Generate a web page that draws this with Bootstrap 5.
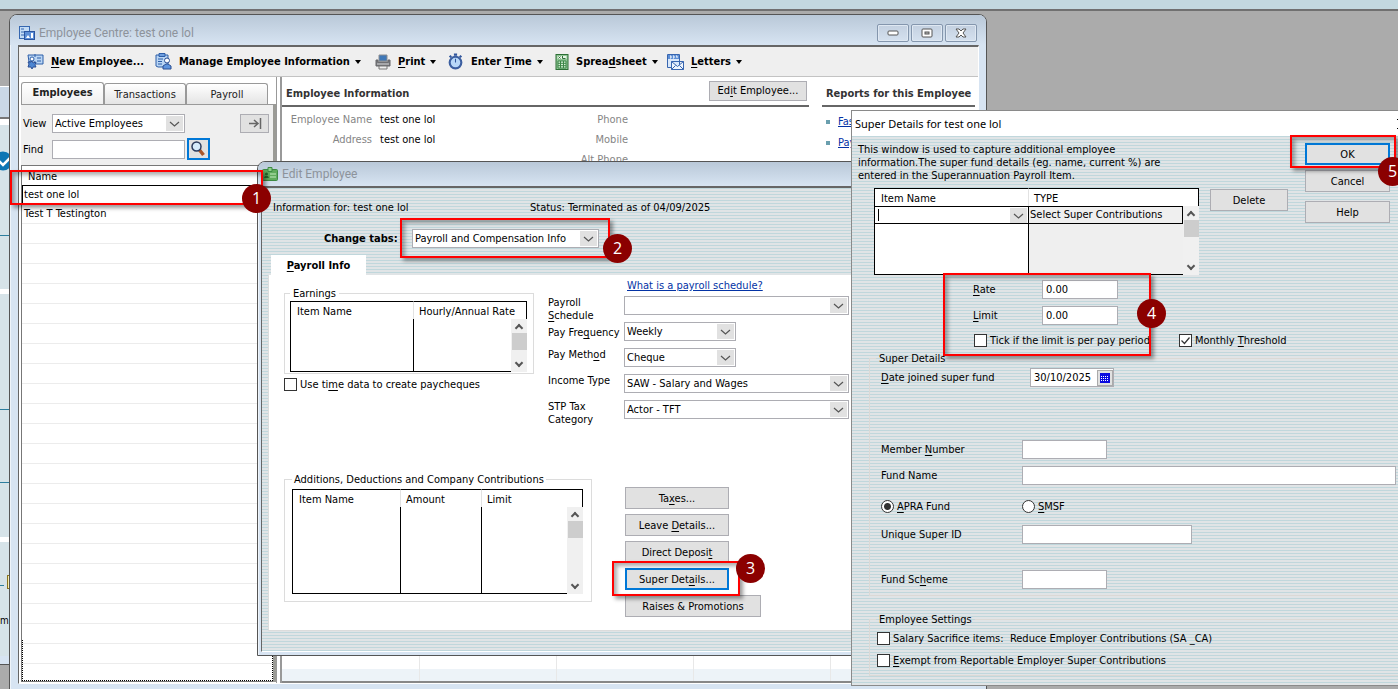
<!DOCTYPE html>
<html lang="en">
<head>
<meta charset="utf-8">
<meta name="viewport" content="width=device-width, initial-scale=1">
<title>Employee Centre</title>
<link rel="stylesheet" href="https://cdn.jsdelivr.net/npm/bootstrap@5.3.0/dist/css/bootstrap.min.css">
<style>
:root{--stripes:repeating-linear-gradient(#c0d7dc 0 1px,#e0e4e6 1px 3px);--frame:#d7e4f2;--line:#adadb3}
body{font:11px/13px "DejaVu Sans Condensed","Liberation Sans",sans-serif;color:#000;background:#ababab}
.desktop{overflow:hidden;background:#ababab}
.strip{height:11px;background:#c3d8df;border-bottom:2px solid #707070}
u{text-underline-offset:2px}
button,input,select{font:inherit;color:#000;border-radius:0}
label{white-space:nowrap}
a{color:#0433a5}

/* windows */
.win{position:absolute;background:var(--frame);border:1px solid #555;border-radius:8px 8px 0 0;overflow:hidden;box-shadow:inset 1px 1px #eef4fa}
.win-title{background:linear-gradient(#b9c8d8,#d7e4f2);color:#8d939b;font:12px/16px Roboto,"Liberation Sans",sans-serif}
.win-back{left:-30px;width:40px;top:86px;height:579px;border-radius:0;background:#d6e3e8}
.win-main{left:9px;right:411px;top:14px;bottom:-2px;padding:0 7px 6px 8px}
.win-edit{left:257px;width:612px;top:161px;padding:0 3px 3px}
.win-super{left:851px;right:-10px;top:110px;border-radius:0;border-color:#8a8a8a;background:#fff;box-shadow:none}
.win-main>.win-title{height:30px;margin:0 -7px 0 -8px;padding:9px 9px 3px 9px}
.win-edit>.win-title{height:24px;margin:0 -3px;padding:0 4px}
.win-super>.win-title{height:25px;background:#fff;color:#000;padding:0 0 0 3px;font:11px/16px "Noto Sans","Liberation Sans",sans-serif}
.client{border:1px solid #666;border-top-width:2px;border-right-color:#fff;border-bottom-color:#fff}
.capbtn{width:32px;height:18px;padding:0;border:1px solid #8496ad;border-radius:2px;background:linear-gradient(#c3d0e0,#d5e1ef);box-shadow:inset 0 0 0 1px #dfe8f2;display:flex;align-items:center;justify-content:center}
.capset{gap:2px}

/* toolbar */
.tools{display:grid;grid-template-columns:128px 220px 72px 108px 112px auto;height:30px;padding-left:8px;background:#efefef;border-bottom:1px solid #c3c3c3}
.tools button{display:flex;align-items:center;padding:0;border:0;background:none;font-weight:700;white-space:nowrap;text-align:left}
.tools svg{margin-right:7px;flex:none}
.tools button::after{content:"";border:3px solid transparent;border-top:4px solid #000;border-bottom:0;margin-left:5px}
.tools button:first-child::after{display:none}

/* side list */
.side{width:258px;padding:5px 0 1px 2px;border-right:1px solid #999}
.sidetab{height:21px;border:1px solid #999;border-bottom:0;border-radius:3px 3px 0 0;background:linear-gradient(#fff,#e4e4e4);width:82px;padding:0;color:#222}
.sidetab.active{background:linear-gradient(#fff,#efefef);font-weight:700;height:23px;margin-bottom:-1px;width:83px;padding-bottom:3px}
.sidebody{background:#efefef;border-top:1px solid #999;border-right:3px solid #9b9b96;padding-top:9px}
.siderow{padding-left:2px;margin-bottom:5px}
.siderow label{width:29px}
.siderow .fld{width:133px}
.fld{height:19px;border:1px solid var(--line);background:#fff;padding:0 3px;line-height:15px;min-width:0}
select.fld{appearance:none;padding-left:2px;padding-right:19px;background:#fff url("data:image/svg+xml,%3Csvg xmlns='http://www.w3.org/2000/svg' width='17' height='15'%3E%3Crect width='17' height='15' fill='%23e1e1e1'/%3E%3Cpath d='M4 6l4.500 4 4.500-4' fill='none' stroke='%23555' stroke-width='1.200'/%3E%3C/svg%3E") no-repeat right 1px center}
.push{border:1px solid var(--line);background:#e1e1e1;height:22px;padding:0;white-space:nowrap;font-weight:400}
.push.hot{border:2px solid #0078d7}
.list{border:1px solid #777;border-right:0;background:#fff}
.list .head{height:19px;padding:4px 6px 0}
.rowitem{height:20px;padding:3px 2px;border-bottom:1px solid #ececec}
.rowitem.sel{height:19px;border:1px solid #000;padding:2px 1px}
.blank{background:repeating-linear-gradient(#fff 0 19px,#ececec 19px 20px)}
.tail{height:41px;border:1px dotted #000;border-top:0}

/* employee panel */
.detail{margin-left:3px;border-left:2px solid #999;min-width:0}
.infocol{flex:0 0 527px}
.repcol{margin:0 3px 0 13px}
.rule{border-bottom:2px solid #666;height:30px;padding:4px 2px 0 4px;color:#333}
.rule h1{font-size:11px;line-height:13px;font-weight:700;margin:0;white-space:nowrap}
.rule .push{width:98px;height:20px;margin-bottom:5px}
.facts{display:grid;grid-template-columns:90px 154px 86px;column-gap:8px;grid-auto-rows:20px;align-items:center;padding-top:2px}
.facts dt{font-weight:400;color:#858585;text-align:right}
.facts dd{margin:0}
.bullet{width:4px;height:4px;background:#6a9fae}
.journal{border-bottom:2px solid #888}
.journal td{width:137px;height:13px;padding:0;border-right:1px solid #e8e8e8}
.journal tr+tr td{background:#edf3f8}

/* edit form */
.striped{background:var(--stripes)}
.editbody{padding-bottom:20px}
.pagetab{width:95px;height:20px;margin:5px 0 0 9px;background:#fff;border:0;font-weight:700}
.sheet{margin-left:6px;background:#fff;border:1px solid #dcdcdc;border-top:0;padding:0 0 13px 15px}
.inforow{height:38px;padding-left:11px}
.inforow span:first-child{width:257px}
.tabrow{height:24px;padding-left:62px}
.tabrow label{width:88px}
.tabrow .fld{width:187px}
fieldset{border:1px solid #dcdcdc;min-width:0}
legend{font-size:11px;line-height:13px;margin:0;padding:0 3px}
.earncol{padding-top:12px;margin-right:14px}
.earn{width:250px;padding:1px 5px}
.adds{width:308px;padding:3px 7px 7px}
.adds legend{padding:0 2px}
.lower{margin-top:47px}
.btncol{gap:5px;padding-top:14px;margin-left:33px}
.sheetgrid{border-collapse:separate;border-spacing:0;table-layout:fixed;background:#fff}
.sheetgrid th{height:18px;padding:1px 5px 0;font-weight:400;border-top:1px solid #000;border-left:1px solid #e2e2e2;white-space:nowrap}
.sheetgrid th:first-child{border-left-color:#000;padding-left:6px}
.sheetgrid th:last-child{border-right:1px solid #000}
.sheetgrid td{padding:0;border-left:1px solid #000;border-bottom:1px solid #000}
.sheetgrid td.sb{border:0;height:1px}
.sheetgrid .entryrow td:not(.sb){border-top:1px solid #000}
.sheetgrid .entryrow td:nth-child(2){border-right:1px solid #000}
.scroller{background:#f0f0f0;display:flex;flex-direction:column;align-items:center;height:100%}
.scroller::before,.scroller::after{content:"";width:6px;height:6px;border:solid #555;border-width:2px 0 0 2px;transform:rotate(45deg);margin:6px 0 2px}
.scroller::after{transform:rotate(225deg);margin:auto 0 6px}
.scroller i{width:15px;height:17px;background:#cdcdcd}
.c16{width:16px}.c81{width:81px}.c86{width:86px}.c98{width:98px}.c108{width:108px}.c123{width:123px}.c154{width:154px}.c155{width:155px}
.sheetgrid .h53{height:53px}.sheetgrid .h87{height:87px}.sheetgrid .h51{height:51px}
.payform{display:grid;grid-template-columns:76px 112px 113px;grid-auto-rows:26px;align-items:start}
.payform .wide{grid-column:2/4}
.paylink{margin-left:79px}
.tick{appearance:none;width:13px;height:13px;margin:0;border:1px solid #333;background:#fff;flex:none}
.tick[type=radio]{border-radius:50%}
.tick[type=radio]:checked{background:radial-gradient(#333 0 3px,#fff 4px)}
.tick[type=checkbox]:checked{background:#fff url("data:image/svg+xml,%3Csvg xmlns='http://www.w3.org/2000/svg' width='11' height='11'%3E%3Cpath d='M1.500 5.500l3 3 5-6' fill='none' stroke='%23333' stroke-width='1.200'/%3E%3C/svg%3E")}
.check{display:flex;align-items:center;gap:3px}
.wbtn{width:104px}.wbtn-l{width:136px}

/* super dialog */
.superbody{padding:0 0 9px 6px}
.topgrid{display:grid;grid-template-columns:352px 78px 102px}
.topgrid p{margin:0;padding-top:7px;height:52px}
.topgrid .sheetgrid{margin-left:16px}
.topgrid>.push{margin-top:53px}
.okcol{gap:5px;padding:7px 0 0 17px}
.limits{display:grid;grid-template-columns:69px 76px;row-gap:7px;margin:5px 0 0 115px;align-items:center}
.ticks{margin:9px 0 5px 116px}
.ticks .check:first-child{width:205px}
.faint{border-color:#dbd9d6;border-right:0;margin-left:11px;padding:0}
.faint legend{padding:0 3px;margin-left:6px}
.fund{display:grid;grid-template-columns:141px auto;align-items:center;margin-left:11px;height:19px}
.datebox{width:84px;padding:0;margin-left:8px}
.datebox input{width:66px;border:0;padding:0 0 0 3px;background:none}
.datebox button{width:17px;height:16px;border:1px solid #aaa;background:#e1e1e1;padding:0}
.w85{width:85px}.w170{width:170px}
.entry{background:#efefef;height:16px;padding:1px;white-space:nowrap}
.entry select{width:100%;height:16px;border:0;display:block}
.caret{position:absolute;left:3px;top:2px;width:1px;height:12px;background:#000}

/* numbered callouts */
.callout{position:absolute;border:2px solid #f00;box-shadow:3px 3px 4px #0006,inset 3px 3px 4px #0005;pointer-events:none}
.step{position:absolute;width:29px;height:29px;border-radius:50%;background:#8b0000;color:#fff;font:16px/29px "Open Sans","Noto Sans",sans-serif;text-align:center}
</style>
</head>
<body>
<main class="desktop position-relative vh-100">
<div class="strip"></div>

<!-- window at the back, mostly covered -->
<div class="win-back position-absolute overflow-hidden">
  <svg width="40" height="579" aria-hidden="true">
    <path d="M0 0h40v32H0z" fill="#cad8e7"/><path d="M0 0h40v1H0z" fill="#fff"/><path d="M0 31h40v2H0z" fill="#777"/><path d="M0 33h40v6H0zM0 203h40v5H0zM0 451h40v5H0z" fill="#fff"/>
    <path d="M0 149.500h40M0 323.500h40M0 396.500h40M0 499.500h34" stroke="#2c7e9e" fill="none"/>
    <circle cx="33" cy="75" r="9.500" fill="#0e76b4"/><path d="M28 74l5 5 7-7" fill="none" stroke="#fff" stroke-width="2.500"/>
    <rect x="37.500" y="489.500" width="8" height="13" fill="#f6eeb0" stroke="#8a7420"/>
    <path d="M0 570h40v9H0z" fill="#d7e4f2"/><path d="M0 578.500h40" stroke="#555"/>
    <text x="30" y="538" font-size="10">m</text>
  </svg>
</div>

<!-- Employee Centre -->
<section class="win win-main d-flex flex-column">
  <header class="win-title d-flex align-items-center">
    <svg class="me-1" width="16" height="15" viewBox="0 0 16 15"><rect x=".5" y=".5" width="10" height="12" fill="#c4dcf5" stroke="#3567b0"/><path d="M2 3h3M2 6h3M2 9h4" stroke="#3567b0"/><rect x="5.500" y="5.500" width="10" height="8" fill="#5d8fd6" stroke="#2b55a0"/><path d="M7 12l2-3 2 3zM12 12V7h2v5z" fill="#fff"/></svg>
    <span>Employee Centre: test one lol</span>
    <div class="capset d-flex ms-auto">
      <button class="capbtn" aria-label="Minimise"><svg width="12" height="6"><rect x="1" y="1" width="10" height="4" rx="1" fill="#fff" stroke="#555"/></svg></button>
      <button class="capbtn" aria-label="Maximise"><svg width="12" height="10"><rect x="1" y="1" width="10" height="8" rx="1" fill="#fff" stroke="#555"/><rect x="4" y="4" width="4" height="2" fill="#bbb" stroke="#555"/></svg></button>
      <button class="capbtn" aria-label="Close"><svg width="12" height="10"><path d="M1 1h3l2 2 2-2h3L8 5l3 4H8L6 7 4 9H1l3-4z" fill="#fff" stroke="#555"/></svg></button>
    </div>
  </header>
  <div class="client flex-grow-1 d-flex flex-column bg-white">
    <nav class="tools">
      <button><svg width="17" height="17" viewBox="0 0 17 17"><path d="M1 2h15v9H9l-3-4-4 2z" fill="#b9d5f4" stroke="#2d5ea8"/><path d="M8 1v3M10 5h4M10 8h4" stroke="#2d5ea8"/><circle cx="5" cy="6" r="2" fill="#fff" stroke="#2d5ea8"/><path d="M5 8l1 2 3-1-1 3 1 2-3 0-1 2-1-2H1l1-3-1-2 3 0z" fill="#4d86d2" stroke="#2b4f94"/></svg><span><u>N</u>ew Employee...</span></button>
      <button><svg width="17" height="17" viewBox="0 0 17 17"><path d="M1 2h12v12H3L1 13z" fill="#b9d5f4" stroke="#2d5ea8"/><path d="M4 .5h6v3H4z" fill="#6f9fdf" stroke="#2d5ea8"/><path d="M3 6h5M3 8.500h4M3 11h4" stroke="#2d5ea8"/><circle cx="12" cy="7.500" r="2.500" fill="#fff" stroke="#2b4f94"/><path d="M8 16v-3l3-2h2l3 2v3z" fill="#5f95de" stroke="#2b4f94"/></svg><span>Manage Employee Information</span></button>
      <button><svg width="16" height="16" viewBox="0 0 16 16"><path d="M4 1h8v6H4z" fill="#3f78b8" stroke="#8a8c90"/><path d="M1 6h2v2h10V6h2v6H1z" fill="#77787c" stroke="#66676b"/><path d="M2 9h12v2H2z" fill="#a7a8ab"/><path d="M4 12h8v3H4z" fill="#eee" stroke="#777"/></svg><span><u>P</u>rint</span></button>
      <button><svg width="17" height="17" viewBox="0 0 16 16"><path d="M6.500 1.500h3M2.500 4l1.500-1.500M13.500 4L12 2.500" stroke="#31569c" stroke-width="2"/><circle cx="8" cy="9" r="5.500" fill="#b9d8f8" stroke="#3c5fa0" stroke-width="2"/><path d="M8 5.500V9" fill="none" stroke="#31569c"/></svg><span>Enter <u>T</u>ime</span></button>
      <button><svg width="14" height="16" viewBox="0 0 13 16"><rect x=".5" y=".5" width="12" height="15" fill="#8cc493" stroke="#2c6e35"/><path d="M2 2h9v3H2z" fill="#e6f4e6"/><path d="M3 2.500l2 2M5 2.500l-2 2M7 2v2.500h3" stroke="#2c6e35" fill="none"/><path d="M2.500 7h8v7h-8zM2.500 9.300h8M2.500 11.700h8M5 7v7M8 7v7" fill="#d6efd6" stroke="#3b8646"/></svg><span>Sprea<u>d</u>sheet</span></button>
      <button><svg width="17" height="16" viewBox="0 0 17 16"><path d="M.5 .5h12v13H.5z" fill="#d9e8fa" stroke="#3765af"/><path d="M1 1h11v4H1z" fill="#5d8fd6"/><path d="M3 2h1v2H3M6 2h1v2H6M9 2h1v2" stroke="#fff" fill="none"/><path d="M4.500 7.500h12v8h-12zl6 5 6-5M4.500 15.500l4-4M16.500 15.500l-4-4" fill="#eef5fd" stroke="#3765af"/></svg><span><u>L</u>etters</span></button>
    </nav>
    <div class="d-flex flex-grow-1">
      <aside class="side d-flex flex-column">
        <div class="d-flex align-items-end" role="tablist">
          <button class="sidetab active" role="tab">Employees</button><button class="sidetab" role="tab">Transactions</button><button class="sidetab" role="tab">Payroll</button>
        </div>
        <div class="sidebody flex-grow-1 d-flex flex-column">
          <div class="siderow d-flex align-items-center">
            <label for="view">View</label>
            <select id="view" class="fld"><option>Active Employees</option></select>
            <button class="push ms-auto me-1 d-flex align-items-center justify-content-center" style="height:19px;width:29px" aria-label="Expand list"><svg width="14" height="11"><path d="M1 5.500h9M6 2l4 3.500L6 9M12.500 0v11" fill="none" stroke="#666" stroke-width="1.500"/></svg></button>
          </div>
          <div class="siderow d-flex align-items-center">
            <label for="find">Find</label>
            <input id="find" class="fld">
            <button class="push hot d-flex align-items-center justify-content-center" style="width:23px;margin-left:2px" aria-label="Search"><svg width="15" height="16" viewBox="0 0 15 16"><path d="M8.500 9l4 5" stroke="#a8562a" stroke-width="3.500"/><circle cx="5.500" cy="5.500" r="4.500" fill="#d6ebfb" stroke="#2a3a5c" stroke-width="1.500"/></svg></button>
          </div>
          <div class="list flex-grow-1 d-flex flex-column">
            <div class="head">Name</div>
            <div class="rowitem sel">test one lol</div>
            <div class="rowitem">Test T Testington</div>
            <div class="blank flex-grow-1 d-flex flex-column justify-content-end"><div class="tail"></div></div>
          </div>
        </div>
      </aside>
      <div class="detail flex-grow-1 d-flex flex-column">
        <div class="d-flex">
          <div class="infocol">
            <div class="rule d-flex align-items-center"><h1>Employee Information</h1><button class="push ms-auto">Ed<u>i</u>t Employee...</button></div>
            <dl class="facts m-0">
              <dt>Employee Name</dt><dd>test one lol</dd><dt>Phone</dt>
              <dt style="grid-column:1">Address</dt><dd>test one lol</dd><dt>Mobile</dt>
              <dt style="grid-column:3">Alt Phone</dt>
            </dl>
          </div>
          <div class="repcol flex-grow-1">
            <div class="rule d-flex align-items-center"><h1>Reports for this Employee</h1></div>
            <div class="d-flex align-items-center pt-2 ps-1"><span class="bullet me-2"></span><a href="#">Fas</a></div>
            <div class="d-flex align-items-center pt-2 ps-1"><span class="bullet me-2"></span><a href="#">Pay</a></div>
          </div>
        </div>
        <table class="journal mt-auto align-self-start"><tbody><tr><td></td><td></td><td></td><td></td><td></td></tr><tr><td></td><td></td><td></td><td></td><td></td></tr></tbody></table>
      </div>
    </div>
  </div>
</section>

<!-- Edit Employee -->
<section class="win win-edit">
  <header class="win-title d-flex align-items-center">
    <svg class="me-1" width="16" height="14" viewBox="0 0 16 14"><rect x=".5" y="2.500" width="15" height="11" rx="1" fill="#5fab5c" stroke="#3d8a43"/><path d="M6 .500h4v4H6z" fill="#8fd08a" stroke="#3d8a43"/><path d="M8 7h6M8 10h6" stroke="#c6ecc0"/><circle cx="4.500" cy="7" r="1.500" fill="#246b2c"/><path d="M2 11h5l-1-2H3z" fill="#246b2c"/></svg>
    <span>Edit Employee</span>
  </header>
  <div class="client striped editbody">
    <div class="inforow d-flex align-items-center"><span>Information for: test one lol</span><span>Status: Terminated as of 04/09/2025</span></div>
    <div class="tabrow d-flex align-items-center">
      <label class="fw-bold" for="tabs">Change tabs:</label>
      <select id="tabs" class="fld"><option>Payroll and Compensation Info</option></select>
    </div>
    <button class="pagetab d-block" role="tab"><u>P</u>ayroll Info</button>
    <form class="sheet">
      <div class="d-flex">
        <div class="earncol">
          <fieldset class="earn"><legend class="float-none w-auto">Earnings</legend>
            <table class="sheetgrid"><colgroup><col class="c123"><col class="c98"><col class="c16"></colgroup>
              <thead><tr><th>Item Name</th><th colspan="2">Hourly/Annual Rate</th></tr></thead>
              <tbody><tr><td class="h53"></td><td></td><td class="sb"><div class="scroller"><i></i></div></td></tr></tbody></table>
          </fieldset>
          <div class="check mt-1"><input class="tick" type="checkbox" id="time"><label for="time">Use ti<u>m</u>e data to create paycheques</label></div>
        </div>
        <div class="pt-1">
          <a class="paylink d-block mb-1" href="#">What is a payroll schedule?</a>
          <div class="payform">
            <label for="sch">Payroll<br><u>S</u>chedule</label><select id="sch" class="fld wide"><option></option></select>
            <label for="frq" class="pt-1">Pay Fre<u>q</u>uency</label><select id="frq" class="fld"><option>Weekly</option></select><span></span>
            <label for="met">Pay Meth<u>o</u>d</label><select id="met" class="fld"><option>Cheque</option></select><span></span>
            <label for="inc">Income Type</label><select id="inc" class="fld wide"><option>SAW - Salary and Wages</option></select>
            <label for="stp">STP Tax<br>Category</label><select id="stp" class="fld wide"><option>Actor - TFT</option></select>
          </div>
        </div>
      </div>
      <div class="lower d-flex">
        <fieldset class="adds align-self-start"><legend class="float-none w-auto">Additions, Deductions and Company Contributions</legend>
          <table class="sheetgrid"><colgroup><col class="c108"><col class="c81"><col class="c86"><col class="c16"></colgroup>
            <thead><tr><th>Item Name</th><th>Amount</th><th colspan="2">Limit</th></tr></thead>
            <tbody><tr><td class="h87"></td><td></td><td></td><td class="sb"><div class="scroller"><i></i></div></td></tr></tbody></table>
        </fieldset>
        <div class="btncol d-flex flex-column">
          <button type="button" class="push wbtn">Ta<u>x</u>es...</button>
          <button type="button" class="push wbtn">Leave <u>D</u>etails...</button>
          <button type="button" class="push wbtn">Direct Deposi<u>t</u></button>
          <button type="button" class="push hot wbtn">Super Det<u>a</u>ils...</button>
          <button type="button" class="push wbtn-l">Raises &amp; Promotions</button>
        </div>
      </div>
    </form>
  </div>
</section>

<!-- Super Details -->
<section class="win win-super">
  <header class="win-title d-flex align-items-center"><span>Super Details for test one lol</span><svg class="ms-auto" width="10" height="10" aria-hidden="true"><path d="M0 0l10 10M10 0L0 10" stroke="#000"/></svg></header>
  <form class="superbody striped">
    <div class="topgrid">
      <div>
        <p>This window is used to capture additional employee<br>information.The super fund details (eg. name, current %) are<br>entered in the Superannuation Payroll Item.</p>
        <table class="sheetgrid"><colgroup><col class="c154"><col class="c155"><col class="c16"></colgroup>
          <thead><tr><th>Item Name</th><th colspan="2">TYPE</th></tr></thead>
          <tbody>
            <tr class="entryrow"><td><div class="entry p-0 position-relative"><select class="fld" aria-label="Item Name"><option></option></select><span class="caret"></span></div></td><td><div class="entry">Select Super Contributions</div></td><td class="sb" rowspan="2"><div class="scroller"><i></i></div></td></tr>
            <tr><td class="h51"></td><td style="background:#efefef"></td></tr>
          </tbody></table>
      </div>
      <button type="button" class="push">Delete</button>
      <div class="okcol d-flex flex-column">
        <button type="button" class="push hot">OK</button>
        <button type="button" class="push">Cancel</button>
        <button type="button" class="push mt-1">Help</button>
      </div>
    </div>
    <div class="limits">
      <label for="rate"><u>R</u>ate</label><input id="rate" class="fld" value="0.00">
      <label for="lim"><u>L</u>imit</label><input id="lim" class="fld" value="0.00">
    </div>
    <div class="ticks d-flex align-items-center">
      <div class="check"><input class="tick" type="checkbox" id="per"><label for="per">Tick if the limit is per pay period</label></div>
      <div class="check"><input class="tick" type="checkbox" id="mon" checked><label for="mon">Monthly <u>T</u>hreshold</label></div>
    </div>
    <fieldset class="faint"><legend class="float-none w-auto">Super Details</legend>
      <div class="fund" style="margin-top:3px">
        <label for="joined"><u>D</u>ate joined super fund</label>
        <div class="fld datebox d-flex align-items-center"><input id="joined" value="30/10/2025"><button type="button" class="d-flex align-items-center justify-content-center" aria-label="Calendar"><svg width="10" height="10"><path d="M0 0h10v10H0z" fill="#0a0ae0"/><path d="M1 3.500h8M1 5.500h8M1 7.500h8" stroke="#fff" stroke-dasharray="1 1"/></svg></button></div>
      </div>
      <div class="fund" style="margin-top:53px"><label for="mem">Member <u>N</u>umber</label><input id="mem" class="fld w85"></div>
      <div class="fund" style="margin-top:7px"><label for="fname">Fund Name</label><input id="fname" class="fld" style="margin-right:11px"></div>
      <div class="fund" style="margin-top:12px">
        <div class="check"><input class="tick" type="radio" name="kind" id="apra" checked><label for="apra"><u>A</u>PRA Fund</label></div>
        <div class="check"><input class="tick" type="radio" name="kind" id="smsf"><label for="smsf"><u>S</u>MSF</label></div>
      </div>
      <div class="fund" style="margin-top:9px"><label for="usi">Unique Super ID</label><input id="usi" class="fld w170"></div>
      <div class="fund" style="margin-top:26px;margin-bottom:6px"><label for="schm">Fund Sc<u>h</u>eme</label><input id="schm" class="fld w85"></div>
    </fieldset>
    <fieldset class="faint" style="margin-top:17px"><legend class="float-none w-auto">Employee Settings</legend>
      <div class="check" style="margin:6px 0 9px 7px"><input class="tick" type="checkbox" id="sac"><label for="sac">Salary Sacrifice items:&nbsp; Reduce Employer Contributions (SA _CA)</label></div>
      <div class="check" style="margin:0 0 8px 7px"><input class="tick" type="checkbox" id="exe"><label for="exe"><u>E</u>xempt from Reportable Employer Super Contributions</label></div>
    </fieldset>
  </form>
</section>

<!-- numbered steps over the windows -->
<div class="callout" style="left:10px;top:170px;width:253px;height:35px"></div><div class="step" style="left:242px;top:184px">1</div>
<div class="callout" style="left:400px;top:218px;width:210px;height:40px"></div><div class="step" style="left:603px;top:234px">2</div>
<div class="callout" style="left:612px;top:561px;width:128px;height:35px"></div><div class="step" style="left:736px;top:554px">3</div>
<div class="callout" style="left:943px;top:273px;width:208px;height:83px"></div><div class="step" style="left:1137px;top:299px">4</div>
<div class="callout" style="left:1290px;top:135px;width:106px;height:33px"></div><div class="step" style="left:1378px;top:157px">5</div>
</main>
<script src="https://cdn.jsdelivr.net/npm/bootstrap@5.3.0/dist/js/bootstrap.bundle.min.js"></script>
</body>
</html>
